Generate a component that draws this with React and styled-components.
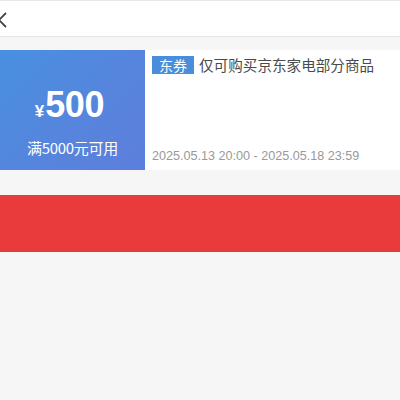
import React from "react";
import styled, { createGlobalStyle } from "styled-components";

const Global = createGlobalStyle`
  html, body { margin: 0; padding: 0; background: #f6f6f6; }
  body { font-family: "Liberation Sans", "Noto Sans CJK SC", sans-serif; }
`;

const Page = styled.div`
  width: 400px;
  height: 400px;
  overflow: hidden;
  background: #f6f6f6;
  display: flex;
  flex-direction: column;
`;

const Header = styled.div`
  height: 37px;
  flex-shrink: 0;
  background: #fff;
  border-top: 1px solid #e8e8e8;
  border-bottom: 1px solid #e4e4e4;
  box-sizing: border-box;
  display: flex;
  align-items: center;
  margin-bottom: 13px;
`;

const Back = styled.svg`
  margin-left: -6px;
  margin-top: 2px;
`;

const Card = styled.div`
  height: 120px;
  display: flex;
  background: #fff;
`;

const Face = styled.div`
  width: 145px;
  flex-shrink: 0;
  background: linear-gradient(135deg, #4890e0 0%, #5784dd 60%, #5c7fdc 100%);
  color: #fff;
  display: flex;
  flex-direction: column;
  align-items: center;
  justify-content: center;
  padding-top: 22px;
  box-sizing: border-box;
`;

const Amount = styled.div`
  display: flex;
  align-items: baseline;
  margin-right: 6px;
`;

const Yen = styled.span`
  font-size: 17px;
  font-weight: bold;
  margin-right: 1px;
`;

const Value = styled.span`
  font-size: 36px;
  font-weight: bold;
  line-height: 40px;
  letter-spacing: -0.3px;
`;

const Cond = styled.div`
  font-size: 15px;
  margin-top: 12px;
  font-family: "Noto Sans CJK SC", sans-serif;
  letter-spacing: -0.3px;
`;

const Info = styled.div`
  flex: 1;
  padding: 5px 0 6px 7px;
  display: flex;
  flex-direction: column;
  justify-content: space-between;
`;

const TitleRow = styled.div`
  display: flex;
  align-items: center;
`;

const Tag = styled.span`
  background: #4a8edb;
  color: #fff;
  font-size: 14px;
  font-family: "Noto Sans CJK SC", sans-serif;
  padding: 0 7px;
  line-height: 18px;
  height: 18px;
  margin-right: 5px;
`;

const Title = styled.span`
  font-size: 14.6px;
  color: #4a4a4a;
  font-family: "Noto Sans CJK SC", sans-serif;
  line-height: 20px;
`;

const Time = styled.div`
  font-size: 12.6px;
  color: #999;
  margin-bottom: 1px;
`;

const Red = styled.div`
  margin-top: 25px;
  height: 55px;
  background: #e93b3c;
  border-top: 1px solid #c9474a;
  border-bottom: 1px solid #c9474a;
`;

export default function App() {
  return (
    <Page>
      <Global />
      <Header>
        <Back width="14" height="16" viewBox="0 0 14 16">
          <path d="M12 1 L5 8 L12 15" fill="none" stroke="#444" strokeWidth="1.8" />
        </Back>
      </Header>
      <Card>
        <Face>
          <Amount>
            <Yen>¥</Yen>
            <Value>500</Value>
          </Amount>
          <Cond>满5000元可用</Cond>
        </Face>
        <Info>
          <TitleRow>
            <Tag>东券</Tag>
            <Title>仅可购买京东家电部分商品</Title>
          </TitleRow>
          <Time>2025.05.13 20:00 - 2025.05.18 23:59</Time>
        </Info>
      </Card>
      <Red />
    </Page>
  );
}
